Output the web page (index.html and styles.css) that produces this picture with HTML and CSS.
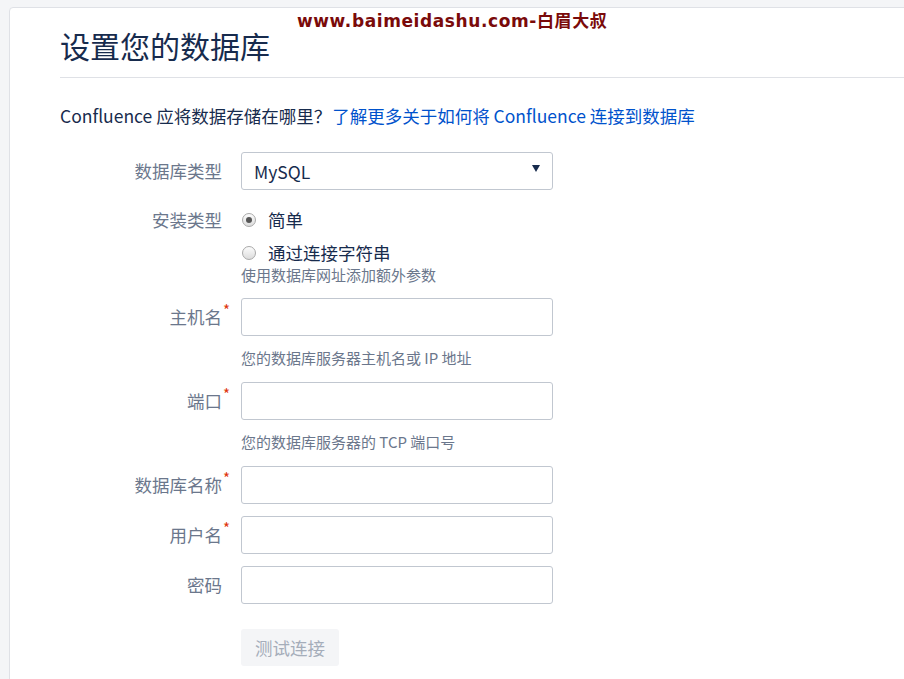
FILE: index.html
```html
<!DOCTYPE html>
<html lang="zh-CN">
<head>
  <meta charset="UTF-8">
  <title>设置您的数据库 - Confluence</title>
  <link rel="stylesheet" href="styles.css">
</head>
<body>
  <div class="watermark">www.baimeidashu.com-白眉大叔</div>
  <div class="page">
    <h1 class="page-title">设置您的数据库</h1>
    <p class="intro">Confluence 应将数据存储在哪里？ <a href="#">了解更多关于如何将 Confluence 连接到数据库</a></p>

    <form class="db-form">
      <div class="row">
        <label class="label">数据库类型</label>
        <div class="field">
          <div class="select"><span>MySQL</span><span class="arrow"></span></div>
        </div>
      </div>

      <div class="row">
        <label class="label label-radio">安装类型</label>
        <div class="field radio-group">
          <div class="radio-item"><span class="radio checked"></span>简单</div>
          <div class="radio-item"><span class="radio"></span>通过连接字符串</div>
          <div class="hint hint-radio">使用数据库网址添加额外参数</div>
        </div>
      </div>

      <div class="row">
        <label class="label">主机名<span class="req">*</span></label>
        <div class="field">
          <input class="text" type="text">
          <div class="hint">您的数据库服务器主机名或 IP 地址</div>
        </div>
      </div>

      <div class="row">
        <label class="label">端口<span class="req">*</span></label>
        <div class="field">
          <input class="text" type="text">
          <div class="hint">您的数据库服务器的 TCP 端口号</div>
        </div>
      </div>

      <div class="row">
        <label class="label">数据库名称<span class="req">*</span></label>
        <div class="field"><input class="text" type="text"></div>
      </div>

      <div class="row">
        <label class="label">用户名<span class="req">*</span></label>
        <div class="field"><input class="text" type="text"></div>
      </div>

      <div class="row">
        <label class="label">密码</label>
        <div class="field"><input class="text" type="password"></div>
      </div>

      <div class="row buttons">
        <div class="label"></div>
        <div class="field"><button type="button" class="btn" disabled>测试连接</button></div>
      </div>
    </form>
  </div>
</body>
</html>
```

FILE: styles.css
```css
html, body { margin: 0; padding: 0; }
body {
  background: #f4f5f7;
  font-family: "Noto Sans CJK SC", "Noto Sans", sans-serif;
  font-size: 17.5px;
  color: #172b4d;
  overflow: hidden;
  height: 679px;
}

.watermark {
  position: absolute;
  left: 297px;
  top: 9px;
  font-family: "DejaVu Sans", "Noto Sans CJK SC", sans-serif;
  font-weight: bold;
  font-size: 17px;
  line-height: 24px;
  color: #7a0a0a;
  letter-spacing: 0.6px;
}

.page {
  margin: 7px -20px 0 9px;
  background: #fff;
  border: 1px solid #dfe1e6;
  border-radius: 4px;
  padding: 17px 0 0 50px;
  min-height: 700px;
}

.page-title {
  margin: 0;
  font-size: 30px;
  font-weight: normal;
  line-height: 40px;
  padding-bottom: 12px;
  border-bottom: 1px solid #dfe1e6;
}

.intro { margin: 25px 0 0; line-height: 25px; }
.intro a { color: #0052cc; text-decoration: none; margin-left: -3px; }

.db-form { margin-top: 24px; }
.row { display: flex; align-items: flex-start; margin-bottom: 12.5px; }
.row.buttons { margin-top: 25px; }

.label {
  position: relative;
  width: 162px;
  flex: none;
  text-align: right;
  color: #6b778c;
  line-height: 37.5px;
  margin-right: 19px;
}
.label-radio { line-height: 22px; padding-top: 7px; }
.req {
  position: absolute;
  left: 100%;
  top: -7px;
  margin-left: 1px;
  color: #de350b;
  font-size: 15px;
}

.field { width: 312px; }

.select, .text {
  box-sizing: border-box;
  width: 312px;
  height: 37.5px;
  border: 1px solid #c1c7d0;
  border-radius: 3px;
  background: #fff;
}
.text { display: block; margin: 0; font: inherit; padding: 0 12px; }
.select {
  display: flex;
  align-items: center;
  justify-content: space-between;
  padding: 2px 12px 0 12px;
}
.arrow {
  width: 0;
  height: 0;
  border-left: 4px solid transparent;
  border-right: 4px solid transparent;
  border-top: 7px solid #172b4d;
  margin-top: -6px;
}

.radio-group { padding-top: 6.5px; }
.radio-item { display: flex; align-items: center; line-height: 22px; margin-bottom: 11px; }
.radio-item + .radio-item { margin-bottom: 0; }
.radio {
  box-sizing: border-box;
  width: 14px;
  height: 14px;
  border-radius: 50%;
  border: 1px solid #a9a9a9;
  background: linear-gradient(#fcfcfc, #dcdcdc);
  margin: 0 12px 0 1px;
  position: relative;
}
.radio.checked::after {
  content: "";
  position: absolute;
  left: 3px;
  top: 3px;
  width: 6px;
  height: 6px;
  border-radius: 50%;
  background: #555;
}

.hint { color: #6b778c; font-size: 15px; line-height: 22px; margin-top: 11px; padding-bottom: 1px; }
.hint-radio { margin-top: 0; padding-bottom: 0; }

.btn {
  font: inherit;
  width: 98px;
  height: 37.5px;
  border: 0;
  border-radius: 3px;
  background: #f4f5f7;
  color: #a5adba;
  padding: 0;
}
```
